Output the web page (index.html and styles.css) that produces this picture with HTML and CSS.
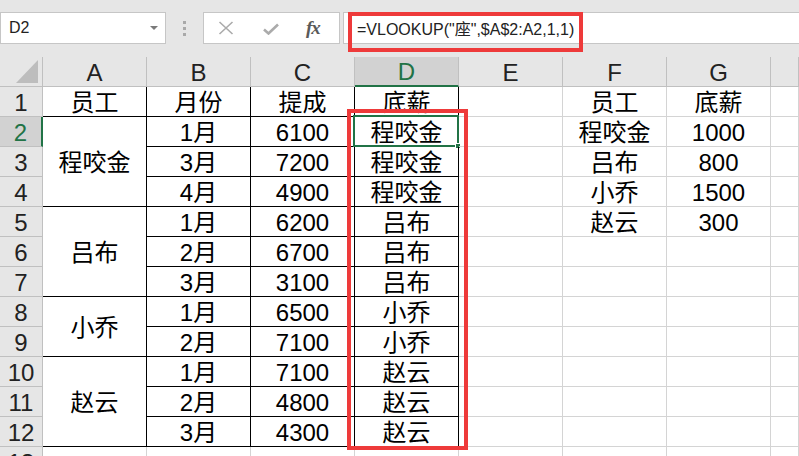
FILE: index.html
```html
<!DOCTYPE html>
<html lang="zh-CN">
<head>
<meta charset="utf-8">
<title>VLOOKUP</title>
<link rel="stylesheet" href="styles.css">
</head>
<body>
<div class="toolbar">
  <div class="namebox"><span>D2</span><span class="caret"></span></div>
  <div class="grip"><i></i><i></i><i></i></div>
  <div class="fxbox">
    <svg class="ico-x" width="16" height="14" viewBox="0 0 16 14"><path d="M1.5 1 L14.5 13 M14.5 1 L1.5 13" stroke="#ababab" stroke-width="1.6" fill="none"/></svg>
    <svg class="ico-ok" width="16" height="12" viewBox="0 0 16 12"><path d="M1 6.5 L5.5 10.5 L15 1.5" stroke="#ababab" stroke-width="2.6" fill="none"/></svg>
    <span class="fx">fx</span>
  </div>
  <div class="formula">=VLOOKUP("座",$A$2:A2,1,1)</div>
  <div class="annot annot-formula"></div>
</div>
<div class="sheet">
  <div class="c h corner"><svg width="22" height="23" viewBox="0 0 22 23"><polygon points="22,0 22,23 0,23" fill="#bdbdbd"/></svg></div>
  <div class="c h">A</div><div class="c h">B</div><div class="c h">C</div><div class="c h hs col-sel">D</div><div class="c h">E</div><div class="c h">F</div><div class="c h">G</div><div class="c h"></div>

  <div class="c h rh">1</div><div class="c b">员工</div><div class="c b">月份</div><div class="c b">提成</div><div class="c b">底薪</div><div class="c"></div><div class="c">员工</div><div class="c">底薪</div><div class="c"></div>

  <div class="c h rh hs row-sel">2</div><div class="c b s3">程咬金</div><div class="c b">1月</div><div class="c b">6100</div><div class="c b">程咬金<span class="active"><span class="handle"></span></span></div><div class="c"></div><div class="c">程咬金</div><div class="c">1000</div><div class="c"></div>

  <div class="c h rh">3</div><div class="c b">3月</div><div class="c b">7200</div><div class="c b">程咬金</div><div class="c"></div><div class="c">吕布</div><div class="c">800</div><div class="c"></div>

  <div class="c h rh">4</div><div class="c b">4月</div><div class="c b">4900</div><div class="c b">程咬金</div><div class="c"></div><div class="c">小乔</div><div class="c">1500</div><div class="c"></div>

  <div class="c h rh">5</div><div class="c b s3">吕布</div><div class="c b">1月</div><div class="c b">6200</div><div class="c b">吕布</div><div class="c"></div><div class="c">赵云</div><div class="c">300</div><div class="c"></div>

  <div class="c h rh">6</div><div class="c b">2月</div><div class="c b">6700</div><div class="c b">吕布</div><div class="c"></div><div class="c"></div><div class="c"></div><div class="c"></div>

  <div class="c h rh">7</div><div class="c b">3月</div><div class="c b">3100</div><div class="c b">吕布</div><div class="c"></div><div class="c"></div><div class="c"></div><div class="c"></div>

  <div class="c h rh">8</div><div class="c b s2">小乔</div><div class="c b">1月</div><div class="c b">6500</div><div class="c b">小乔</div><div class="c"></div><div class="c"></div><div class="c"></div><div class="c"></div>

  <div class="c h rh">9</div><div class="c b">2月</div><div class="c b">7100</div><div class="c b">小乔</div><div class="c"></div><div class="c"></div><div class="c"></div><div class="c"></div>

  <div class="c h rh">10</div><div class="c b s3">赵云</div><div class="c b">1月</div><div class="c b">7100</div><div class="c b">赵云</div><div class="c"></div><div class="c"></div><div class="c"></div><div class="c"></div>

  <div class="c h rh">11</div><div class="c b">2月</div><div class="c b">4800</div><div class="c b">赵云</div><div class="c"></div><div class="c"></div><div class="c"></div><div class="c"></div>

  <div class="c h rh">12</div><div class="c b">3月</div><div class="c b">4300</div><div class="c b">赵云</div><div class="c"></div><div class="c"></div><div class="c"></div><div class="c"></div>

  <div class="c h rh">13</div><div class="c"></div><div class="c"></div><div class="c"></div><div class="c"></div><div class="c"></div><div class="c"></div><div class="c"></div><div class="c"></div>

  <div class="annot annot-col"></div>
</div>
</body>
</html>
```

FILE: styles.css
```css
html, body {
  margin: 0;
  padding: 0;
}
body {
  width: 799px;
  height: 456px;
  overflow: hidden;
  background: #e6e6e6;
  font-family: "Liberation Sans", "Noto Sans CJK SC", sans-serif;
  color: #000;
}

/* formula bar */
.toolbar {
  position: relative;
  height: 57px;
  box-sizing: border-box;
  padding-top: 12px;
  display: flex;
  align-items: flex-start;
}
.namebox {
  width: 166px;
  height: 32px;
  box-sizing: border-box;
  background: #fff;
  border: 1px solid #c6c6c6;
  display: flex;
  align-items: center;
  justify-content: space-between;
  padding: 0 7px 0 8px;
  font-size: 16px;
  color: #222;
}
.caret {
  width: 0;
  height: 0;
  border-left: 4px solid transparent;
  border-right: 4px solid transparent;
  border-top: 4px solid #7a7a7a;
}
.grip {
  width: 37px;
  height: 32px;
  display: flex;
  flex-direction: column;
  align-items: center;
  justify-content: center;
  gap: 3px;
}
.grip i {
  display: block;
  width: 3px;
  height: 3px;
  background: #a9a9a9;
}
.fxbox {
  width: 137px;
  height: 32px;
  box-sizing: border-box;
  background: #fff;
  border: 1px solid #c6c6c6;
  display: flex;
  align-items: center;
  padding-left: 14px;
}
.ico-x { margin-right: 29px; }
.ico-ok { margin-right: 27px; margin-top: 1px; }
.fx {
  font-family: "Liberation Serif", serif;
  font-style: italic;
  font-weight: bold;
  font-size: 19px;
  color: #5a5a5a;
  letter-spacing: -1px;
}
.formula {
  flex: 1;
  margin-left: 3px;
  height: 32px;
  box-sizing: border-box;
  background: #fff;
  border: 1px solid #c6c6c6;
  border-right: none;
  padding-left: 13px;
  display: flex;
  align-items: center;
  font-size: 16px;
  color: #222;
  white-space: nowrap;
}

/* annotations */
.annot {
  position: absolute;
  box-sizing: border-box;
  border: 4px solid #ee3a3a;
  pointer-events: none;
}
.annot-formula {
  left: 348px;
  top: 12px;
  width: 235px;
  height: 40px;
}
.annot-col {
  left: 347px;
  top: 52px;
  width: 121px;
  height: 341px;
}

/* sheet grid */
.sheet {
  position: relative;
  display: grid;
  grid-template-columns: 43px repeat(7, 104px) 1fr;
  grid-template-rows: repeat(14, 30px);
  background: #fff;
}
.c {
  position: relative;
  box-sizing: border-box;
  border-right: 1px solid #d4d4d4;
  border-bottom: 1px solid #d4d4d4;
  display: flex;
  align-items: center;
  justify-content: center;
  padding-top: 2px;
  font-size: 24px;
  line-height: 1;
  white-space: nowrap;
}
.b {
  border-color: #000;
}
.h {
  background: #e6e6e6;
  border-color: #c0c0c0;
  color: #222;
}
.rh {
  padding-left: 0;
}
.hs {
  background: #d2d2d2;
  color: #217346;
}
.col-sel {
  border-bottom: 2px solid #217346;
}
.row-sel {
  border-right: 2px solid #217346;
}
.corner {
  justify-content: flex-end;
  align-items: flex-end;
  padding: 0 4px 3px 0;
}
.corner svg { display: block; }
.s2 { grid-row: span 2; }
.s3 { grid-row: span 3; }

.active {
  position: absolute;
  left: -2px;
  top: -2px;
  right: -1px;
  bottom: -1px;
  border: 2px solid #217346;
}
.handle {
  position: absolute;
  right: -4px;
  bottom: -4px;
  width: 4px;
  height: 4px;
  background: #217346;
  border: 1px solid #fff;
}
```
